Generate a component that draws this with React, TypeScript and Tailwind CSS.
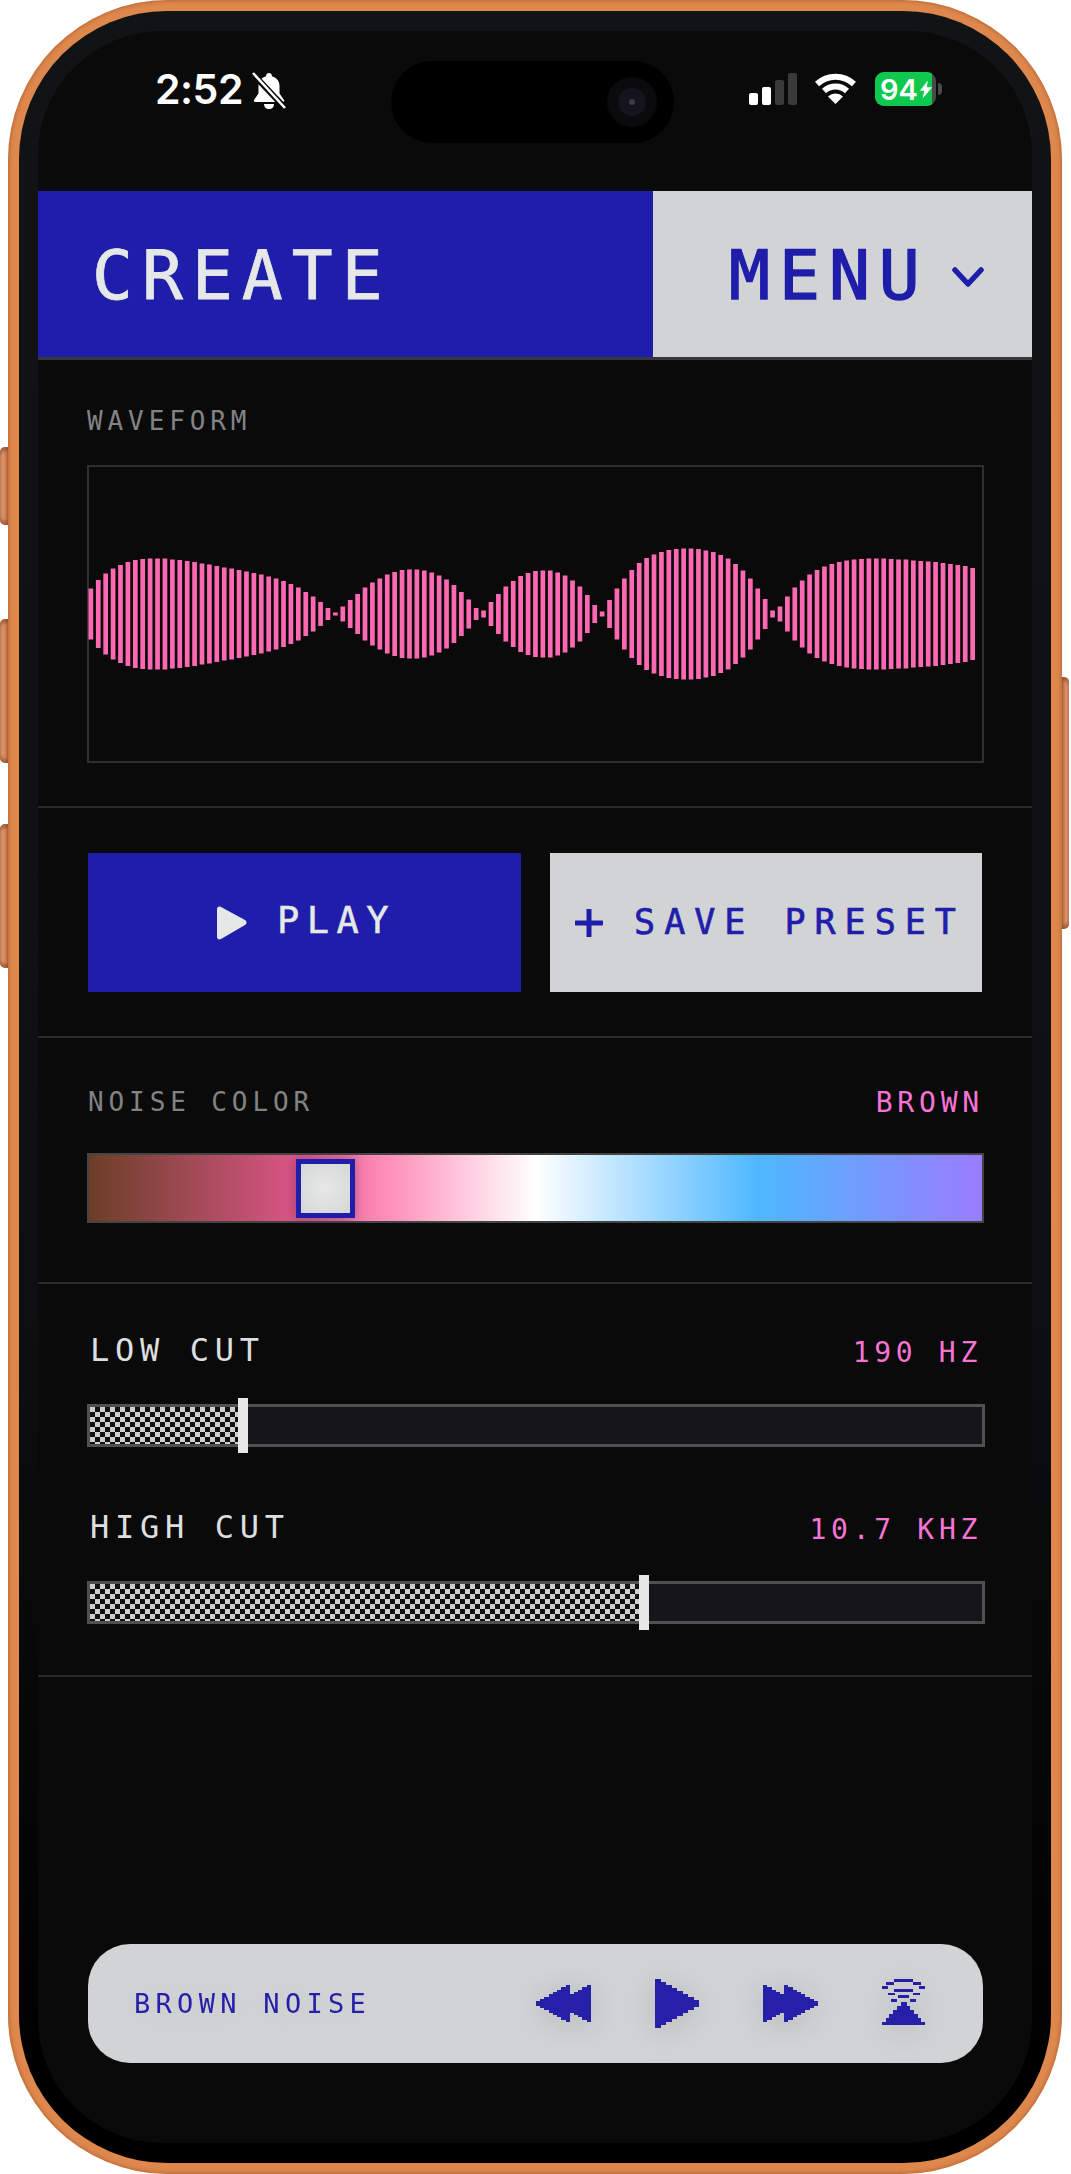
import React from 'react';

const MONO = "font-['DejaVu_Sans_Mono',monospace]";

// bar heights in px, read off the reference
const WAVE = [
  51, 68, 81, 91, 98, 104, 108, 110, 111, 111, 111, 109, 108, 106, 104, 101, 99, 96, 93, 91, 88, 85, 82, 79, 75, 71, 66,
  60, 53, 44, 35, 24, 12, 3, 15, 28, 40, 53, 63, 71, 79, 84, 88, 89, 89, 87, 83, 77, 69, 58, 44, 29, 12, 7, 24, 40, 55,
  66, 76, 82, 86, 87, 87, 83, 77, 67, 55, 38, 18, 5, 28, 51, 71, 88, 102, 112, 119, 124, 128, 130, 131, 131, 130, 127,
  124, 118, 111, 100, 87, 71, 51, 30, 7, 15, 35, 53, 67, 79, 88, 95, 100, 104, 107, 109, 110, 111, 111, 111, 110,
  109, 109, 107, 106, 105, 104, 102, 100, 98, 96, 92,
];

function Waveform() {
  return (
    <svg className="block h-full w-full overflow-visible" viewBox="0 0 892 294">
      {WAVE.map((h, i) => (
        <rect key={i} x={-1 + i * 7.41} y={147 - h / 2} width={4.7} height={h} fill="#ff69b4" />
      ))}
    </svg>
  );
}

function StatusBar() {
  return (
    <div className="flex h-[160px] shrink-0 items-start pl-[117px] pt-[31px]">
      <div className="mt-[2px] w-[92px] font-['Inter',sans-serif] text-[41px] font-semibold leading-[50px] tracking-[-0.5px] text-white">
        2:52
      </div>
      <svg className="ml-[5px] mt-[10px] h-[38px] w-[34px]" viewBox="0 0 34 38">
        <path
          d="M17 1c-2 0-3 1.400-3 3.200C9 5.600 6.500 9.500 6.500 14v7.500L2 28c-.6 1 0 2 1 2h28c1 0 1.600-1 1-2l-4.500-6.500V14c0-4.500-2.500-8.400-7.500-9.800C20 2.400 19 1 17 1z"
          fill="#fff"
        />
        <path d="M12 32h10c0 3-2 5-5 5s-5-2-5-5z" fill="#fff" />
        <path d="M1 2l32 34" stroke="#0a0a0a" strokeWidth="6" />
        <path d="M1 1l32 35" stroke="#fff" strokeWidth="2.500" />
      </svg>
      <div className="ml-[105px] flex h-[82px] w-[283px] shrink-0 -translate-y-[1px] items-center justify-end rounded-full bg-black pr-[17px]">
        <div className="flex h-[50px] w-[50px] items-center justify-center rounded-full bg-[#0b0b0e]">
          <div className="flex h-[28px] w-[28px] items-center justify-center rounded-full bg-[#15131e]">
            <div className="h-[6px] w-[6px] rounded-full bg-[#3a3a55]" />
          </div>
        </div>
      </div>
      <div className="ml-[75px] mt-[11px] flex h-[32px] items-end gap-[4px]">
        <div className="h-[12px] w-[9px] rounded-[2px] bg-white" />
        <div className="h-[18px] w-[9px] rounded-[2px] bg-white" />
        <div className="h-[25px] w-[9px] rounded-[2px] bg-[#3a3a3a]" />
        <div className="h-[32px] w-[9px] rounded-[2px] bg-[#3a3a3a]" />
      </div>
      <svg className="ml-[18px] mt-[10px] h-[33px] w-[41px]" viewBox="0 0 41 33" fill="none">
        <path d="M2 12A27 27 0 0 1 39 12" stroke="#fff" strokeWidth="6" />
        <path d="M9 19A17 17 0 0 1 32 19" stroke="#fff" strokeWidth="6" />
        <path d="M20.500 32L13 24.500A11 11 0 0 1 28 24.500Z" fill="#fff" />
      </svg>
      <div className="ml-[19px] mt-[10px] flex h-[34px] w-[61px] items-center overflow-hidden rounded-[9px] bg-[#4a4a4a]">
        <div className="flex h-full w-[57px] items-center bg-[#0fc84e] pl-[5px] font-['Inter',sans-serif] text-[29px] font-semibold leading-none text-white">
          94
          <svg className="ml-[2px] h-[21px] w-[14px]" viewBox="0 0 14 21">
            <path d="M9 0L0 12h5l-2 9 11-13H8z" fill="#fff" />
          </svg>
        </div>
      </div>
      <div className="ml-[2px] mt-[21px] h-[12px] w-[4px] rounded-r-full bg-[#4a4a4a]" />
    </div>
  );
}

function Header() {
  return (
    <div className={`flex h-[169px] shrink-0 border-b-[3px] border-b-[#37373b] ${MONO} text-[68px] leading-none tracking-[9px]`}>
      <div className="flex w-[615px] items-center bg-[#1f1eaa] pl-[54px] text-[#e6e8e8] [-webkit-text-stroke:0.8px_#e6e8e8]">
        <span className="mt-[3px]">CREATE</span>
      </div>
      <div className="flex flex-1 items-center bg-[#d2d3d5] pl-[76px] text-[#1f1eaa] [-webkit-text-stroke:1.5px_#1f1eaa]">
        <span className="mt-[3px]">MENU</span>
        <svg className="ml-[23px] mt-[6px] h-[22px] w-[32px]" viewBox="0 0 32 22" fill="none">
          <path d="M3 4l13 14L29 4" stroke="#1f1eaa" strokeWidth="5.500" strokeLinecap="round" strokeLinejoin="round" />
        </svg>
      </div>
    </div>
  );
}

function Label({ children, className = '' }: { children: React.ReactNode; className?: string }) {
  return <div className={`${MONO} leading-[27px] ${className}`}>{children}</div>;
}

function Slider({
  name,
  value,
  fill,
  className = '',
}: {
  name: string;
  value: string;
  fill: number;
  className?: string;
}) {
  return (
    <div className={className}>
      <div className="flex h-[30px] items-center justify-between pl-[3px] pr-[3px]">
        <div className={`${MONO} text-[32px] leading-none tracking-[5.700px] text-[#dcdedf]`}>{name}</div>
        <div className={`${MONO} mt-[5px] text-[28px] leading-none tracking-[4.700px] text-[#f774d4]`}>{value}</div>
      </div>
      <div className="relative mt-[39px] h-[43px] border-[3px] border-[#505052] bg-[#16161a]">
        <div
          className="h-full bg-[conic-gradient(#111_25%,#cfcfcf_0_50%,#111_0_75%,#cfcfcf_0)] bg-[length:10px_10px]"
          style={{ width: fill }}
        />
        <div className="absolute -bottom-[9px] -top-[9px] w-[10px] bg-[#e6e8e8]" style={{ left: fill - 3 }} />
      </div>
    </div>
  );
}

// stepped triangle, pointing right, like the pixel art in the player
function stepped(x0: number, w: number, h: number, cy: number, step: number) {
  const rects = [];
  const n = Math.round(w / step);
  for (let i = 0; i < n; i++) {
    const colH = h * (1 - i / n);
    rects.push(<rect key={`${x0}-${i}`} x={x0 + i * step} y={cy - colH / 2} width={step + 0.2} height={colH} />);
  }
  return rects;
}

function PlayerIcon({ kind }: { kind: 'prev' | 'play' | 'next' }) {
  if (kind === 'play') {
    return (
      <svg className="h-[49px] w-[44px]" viewBox="0 0 44 49" fill="#2620a8" shapeRendering="crispEdges">
        {stepped(0, 44, 49, 24.500, 5.500)}
      </svg>
    );
  }
  return (
    <svg
      className={`h-[37px] w-[55px] ${kind === 'prev' ? '-scale-x-100' : ''}`}
      viewBox="0 0 55 37"
      fill="#2620a8"
      shapeRendering="crispEdges"
    >
      {stepped(0, 34, 37, 18.500, 4.250)}
      {stepped(21, 34, 37, 18.500, 4.250)}
    </svg>
  );
}

function BroadcastIcon() {
  const arcs = [
    [12, 1, 19, 2.500],
    [16, 17, 11, 2.500],
    [12, 11, 19, 2.500],
  ];
  const sides = [
    [4, 4, 8, 2.500],
    [0, 8, 6, 2.500],
    [5.500, 14.500, 7, 2.500],
    [9, 21, 6, 2.500],
  ];
  const rows = [];
  for (let i = 0; i < 6; i++) {
    const w = 6 + i * 7.400;
    rows.push(<rect key={i} x={21.500 - w / 2} y={24 + i * 3.900} width={w} height={4} />);
  }
  return (
    <svg className="h-[47px] w-[43px]" viewBox="0 0 43 47" fill="#2620a8" shapeRendering="crispEdges">
      {arcs.map(([x, y, w, h]) => (
        <rect key={`${x}-${y}`} x={x} y={y} width={w} height={h} />
      ))}
      {sides.map(([x, y, w, h]) => (
        <React.Fragment key={`${x}-${y}`}>
          <rect x={x} y={y} width={w} height={h} />
          <rect x={43 - x - w} y={y} width={w} height={h} />
        </React.Fragment>
      ))}
      {rows}
    </svg>
  );
}

function Player() {
  return (
    <div className="flex h-[119px] items-center rounded-[42px] bg-[#d2d3d5] pl-[46px] pr-[58px]">
      <div className={`${MONO} text-[27px] leading-none tracking-[5.300px] text-[#2620a8] [filter:drop-shadow(0_4px_16px_rgba(0,0,0,0.08))]`}>
        BROWN NOISE
      </div>
      <div className="ml-auto flex items-center [filter:drop-shadow(0_4px_16px_rgba(0,0,0,0.14))]">
        <PlayerIcon kind="prev" />
        <div className="ml-[64px]">
          <PlayerIcon kind="play" />
        </div>
        <div className="ml-[64px]">
          <PlayerIcon kind="next" />
        </div>
        <div className="-mt-[4px] ml-[64px]">
          <BroadcastIcon />
        </div>
      </div>
    </div>
  );
}

function SideButton({ className }: { className: string }) {
  return (
    <div
      className={`absolute rounded-l-[5px] bg-gradient-to-r from-[#e8a079] to-[#c9764a] shadow-[inset_0_4px_3px_rgba(120,60,30,0.5),inset_0_-4px_3px_rgba(120,60,30,0.5)] ${className}`}
    />
  );
}

export default function App() {
  return (
    <div className="relative h-[2174px] w-[1071px] overflow-hidden bg-white">
      <SideButton className="left-0 top-[447px] h-[78px] w-[8px]" />
      <SideButton className="left-0 top-[619px] h-[144px] w-[8px]" />
      <SideButton className="left-0 top-[824px] h-[144px] w-[8px]" />
      <SideButton className="left-[1062px] top-[677px] h-[252px] w-[7px] -scale-x-100" />

      <div className="ml-[8px] h-[2174px] w-[1054px] rounded-[160px] bg-[#de884d] p-[11px] shadow-[inset_0_0_5px_#a4582a]">
        <div className="h-full w-full rounded-[148px] bg-[linear-gradient(#111315,#0d0f10_60%,#000_96%)] px-[19px] pb-[20px] pt-[20px]">
          <div className="flex h-full w-full flex-col overflow-hidden rounded-[124px] bg-[#0a0a0a]">
            <StatusBar />
            <Header />

            <div className="h-[448px] shrink-0 border-b-2 border-b-[#2a2a2a] pl-[49px] pr-[48px] pt-[48px]">
              <Label className="text-[26px] tracking-[4.900px] text-[#828384]">WAVEFORM</Label>
              <div className="mt-[30px] h-[298px] border-2 border-[#303030]">
                <Waveform />
              </div>
            </div>

            <div className="flex h-[230px] shrink-0 gap-[29px] border-b-2 border-b-[#2a2a2a] pl-[50px] pr-[49px] pt-[45px]">
              <div
                className={`flex h-[139px] w-[433px] items-center justify-center gap-[30px] bg-[#1f1eaa] pl-[3px] ${MONO} text-[37px] leading-none tracking-[7.500px] text-[#e6e8e8] [-webkit-text-stroke:0.5px_#e6e8e8]`}
              >
                <svg className="h-[34px] w-[31px]" viewBox="0 0 31 34">
                  <path d="M1 3c0-2 2-3 4-2l24 13c2 1 2 4 0 5L5 33c-2 1-4 0-4-2z" fill="#e6e8e8" />
                </svg>
                <span className="-mt-[4px]">PLAY</span>
              </div>
              <div
                className={`flex h-[139px] w-[432px] items-center justify-center gap-[31px] bg-[#d2d3d5] pl-[8px] ${MONO} text-[35px] leading-none tracking-[9px] text-[#1f1eaa] whitespace-nowrap [-webkit-text-stroke:0.7px_#1f1eaa]`}
              >
                <svg className="h-[28px] w-[28px] shrink-0" viewBox="0 0 28 28">
                  <path d="M14 1v26M1 14h26" stroke="#1f1eaa" strokeWidth="5" strokeLinecap="round" />
                </svg>
                <span>SAVE PRESET</span>
              </div>
            </div>

            <div className="h-[246px] shrink-0 border-b-2 border-b-[#2a2a2a] pl-[49px] pr-[48px] pt-[51px]">
              <div className="flex items-center justify-between pl-[1px]">
                <Label className="text-[26px] tracking-[4.900px] text-[#828384]">NOISE COLOR</Label>
                <Label className="text-[28px] tracking-[4.800px] text-[#f774d4]">BROWN</Label>
              </div>
              <div className="relative mt-[37px] h-[70px] border-2 border-[#444] bg-[linear-gradient(90deg,#6b3e26,#d85585_23%,#ff8cb6_33%,#fff_50%,#4db8ff_75%,#9b7bff)]">
                <div className="absolute left-[207px] top-[4px] h-[59px] w-[59px] border-[5px] border-[#1f1eaa] bg-[radial-gradient(circle,#e6e8e6,#d6d6d8)] shadow-[0_0_10px_rgba(60,10,90,0.35)]" />
              </div>
            </div>

            <div className="h-[393px] shrink-0 border-b-2 border-b-[#2a2a2a] pl-[49px] pr-[47px] pt-[51px]">
              <Slider name="LOW CUT" value="190 HZ" fill={151} />
              <Slider name="HIGH CUT" value="10.7 KHZ" fill={552} className="mt-[65px]" />
            </div>

            <div className="flex flex-1 flex-col justify-end pb-[80px] pl-[50px] pr-[49px]">
              <Player />
            </div>
          </div>
        </div>
      </div>
    </div>
  );
}
